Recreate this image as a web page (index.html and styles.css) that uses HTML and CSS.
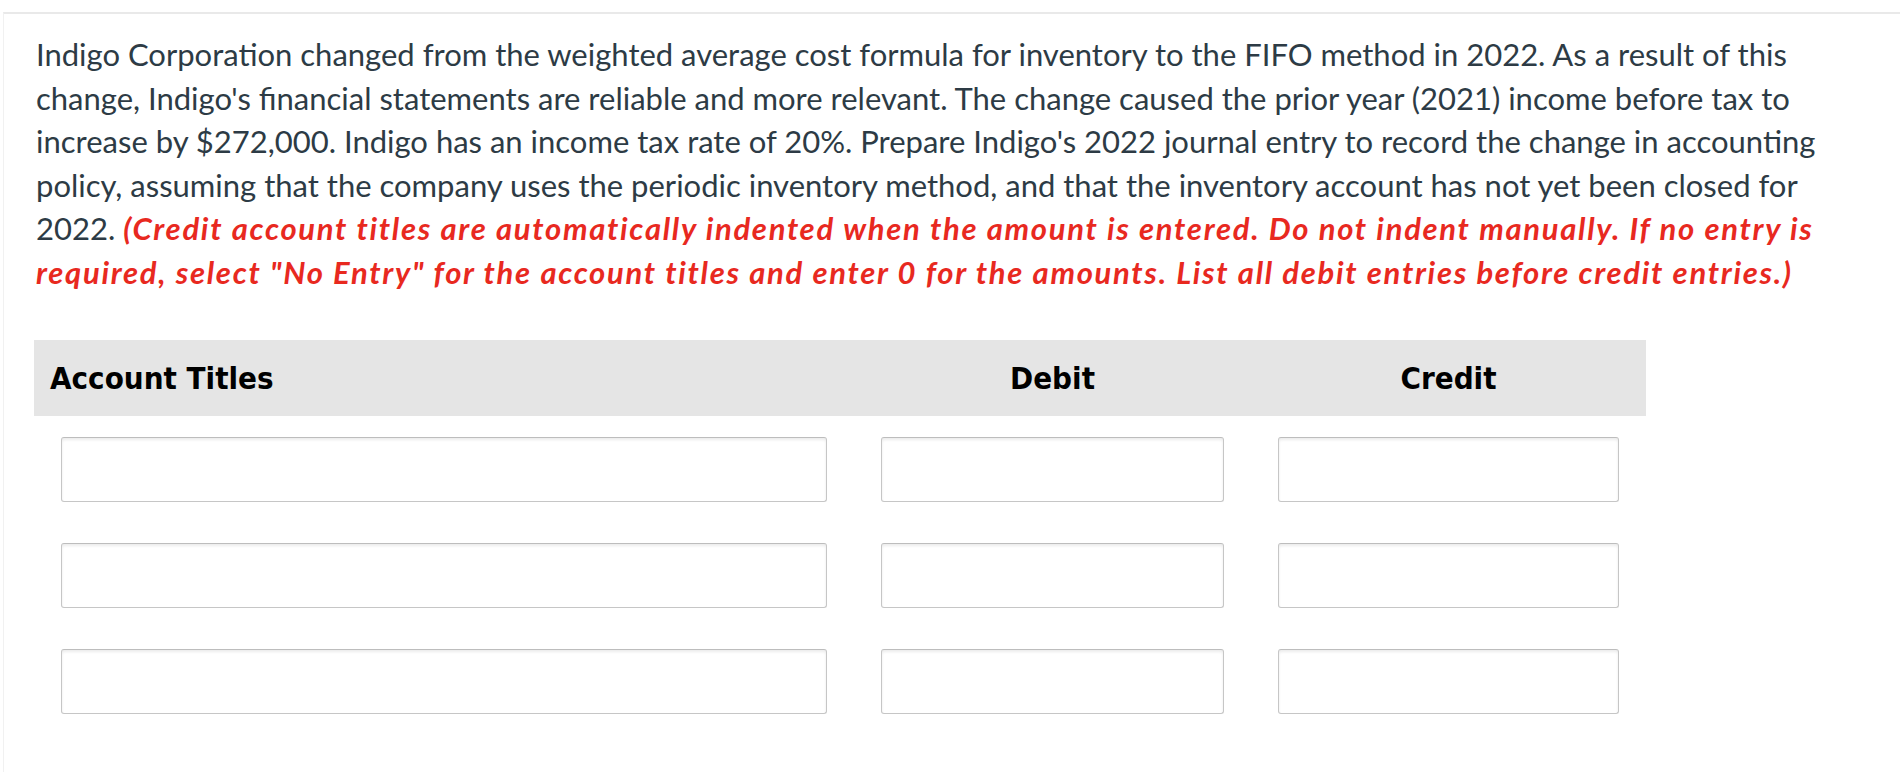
FILE: index.html
```html
<!DOCTYPE html>
<html lang="en">
<head>
<meta charset="utf-8">
<title>Journal entry</title>
<link rel="stylesheet" href="styles.css">
</head>
<body>
<div class="frame">
  <p class="prompt">Indigo Corporation changed from the weighted average cost formula for inventory to the FIFO method in 2022. As a result of this change, Indigo's financial statements are reliable and more relevant. The change caused the prior year (2021) income before tax to increase by $272,000. Indigo has an income tax rate of 20%. Prepare Indigo's 2022 journal entry to record the change in accounting policy, assuming that the company uses the periodic inventory method, and that the inventory account has not yet been closed for 2022. <strong class="instr">(Credit account titles are automatically indented when the amount is entered. Do not indent manually. If no entry is required, select "No Entry" for the account titles and enter 0 for the amounts. List all debit entries before credit entries.)</strong></p>

  <div class="journal">
    <div class="head">
      <div class="hcell hcell-title">Account Titles</div>
      <div class="hcell">Debit</div>
      <div class="hcell">Credit</div>
    </div>
    <div class="rows">
      <div class="row">
        <div class="cell"><input class="field" type="text"></div>
        <div class="cell"><input class="field" type="text"></div>
        <div class="cell"><input class="field" type="text"></div>
      </div>
      <div class="row">
        <div class="cell"><input class="field" type="text"></div>
        <div class="cell"><input class="field" type="text"></div>
        <div class="cell"><input class="field" type="text"></div>
      </div>
      <div class="row">
        <div class="cell"><input class="field" type="text"></div>
        <div class="cell"><input class="field" type="text"></div>
        <div class="cell"><input class="field" type="text"></div>
      </div>
    </div>
  </div>
</div>
</body>
</html>
```
FILE: styles.css
```css
html, body {
  margin: 0;
  padding: 0;
  background: #ffffff;
}

body {
  font-family: Lato, "Noto Sans", sans-serif;
  color: #2d3b45;
  height: 780px;
  overflow: hidden;
}

.frame {
  margin: 12px 0 0 3px;
  border-top: 2px solid #e9e9e9;
  border-left: 1px solid #f1f1f1;
  padding: 19px 0 0 30px;
  height: 760px;
  box-sizing: border-box;
}

.prompt {
  margin: 0;
  padding: 0 36px 0 2px;
  font-size: 31px;
  line-height: 43.5px;
}

.instr {
  color: #e8291f;
  font-style: italic;
  font-weight: 700;
  letter-spacing: 1.7px;
}

.journal {
  margin-top: 46px;
  width: 1612px;
}

.head {
  display: grid;
  grid-template-columns: 820px 397px 395px;
  height: 76px;
  align-items: center;
  background: #e5e5e5;
  font-family: "DejaVu Sans Condensed", "DejaVu Sans", sans-serif;
  font-weight: 700;
  font-size: 31px;
  color: #000;
}

.hcell {
  text-align: center;
}

.hcell-title {
  text-align: left;
  padding-left: 16px;
}

.rows {
  display: flex;
  flex-direction: column;
  gap: 41px;
  padding-top: 21px;
}

.row {
  display: grid;
  grid-template-columns: 820px 397px 395px;
}

.cell {
  padding: 0 27px;
}

.field {
  display: block;
  width: 100%;
  height: 65px;
  box-sizing: border-box;
  margin: 0;
  border: 1px solid #c6c6c6;
  border-top-color: #bdbdbd;
  border-radius: 3px;
  background: #fff;
  box-shadow: inset 0 2px 3px rgba(0, 0, 0, 0.08);
  font: inherit;
}
```
